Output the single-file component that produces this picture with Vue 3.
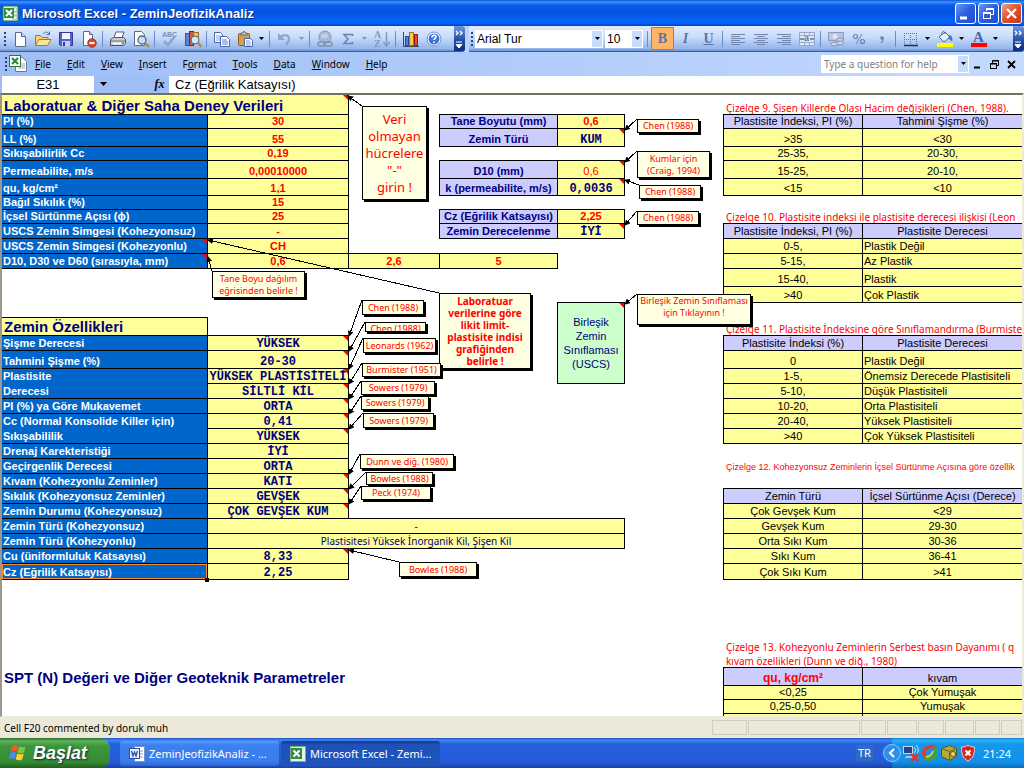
<script setup>
const E = (n) => ['', 'e', n]
const lab = (t, c = '') => [t, 'lab ' + c]
const red = (t) => [t, 'box yel red']
const mono = (t, c = '') => [t, 'box yel mono ' + c]
const lil = (t) => [t, 'box lil']
const head = (a, b) => [[a, 'box hd'], [b, 'box hd last']]
const pair = (a, b, c = '') => [[a, 'box yel ctr'], [b, 'box yel last ' + (c || 'ctr')]]
const title = (t, c = '') => [t, 'ttl ' + c, 2]

const rows = [
  { h: 20, c: [['Laboratuar & Diğer Saha Deney Verileri', 'box yel big note', 2], E(4), title('Çizelge 9. Şisen Killerde Olası Hacim değişikleri (Chen, 1988).')] },
  { h: 14, c: [lab('PI (%)'), red('30'), E(1), lil('Tane Boyutu (mm)'), red('0,6'), E(1), ...head('Plastisite İndeksi, PI (%)', 'Tahmini Şişme (%)')] },
  { h: 18, c: [lab('LL (%)'), red('55'), E(1), lil('Zemin Türü'), mono('KUM', 'note'), E(1), ...pair('>35', '<30')] },
  { h: 14, c: [lab('Sıkışabilirlik Cc'), red('0,19'), E(4), ...pair('25-35,', '20-30,')] },
  { h: 18, c: [lab('Permeabilite, m/s'), red('0,00010000'), E(1), lil('D10 (mm)'), ['0,6', 'box yel red thin note'], E(1), ...pair('15-25,', '20-10,')] },
  { h: 17, c: [lab('qu, kg/cm²'), red('1,1'), E(1), lil('k (permeabilite, m/s)'), mono('0,0036', 'note'), E(1), ...pair('<15', '<10')] },
  { h: 14, c: [lab('Bağıl Sıkılık (%)'), red('15'), E(6)] },
  { h: 14, c: [lab('İçsel Sürtünme Açısı (ϕ)'), red('25'), E(1), lil('Cz (Eğrilik Katsayısı)'), red('2,25'), E(1), title('Çizelge 10. Plastisite indeksi ile plastisite derecesi ilişkisi (Leon')] },
  { h: 15, c: [lab('USCS Zemin Simgesi (Kohezyonsuz)'), red('-'), E(1), lil('Zemin Derecelenme'), mono('İYİ', 'note'), E(1), ...head('Plastisite İndeksi, PI (%)', 'Plastisite Derecesi')] },
  { h: 15, c: [lab('USCS Zemin Simgesi (Kohezyonlu)', 'note'), red('CH'), E(4), ...pair('0-5,', 'Plastik Değil', 'lft')] },
  { h: 15, c: [lab('D10, D30 ve D60 (sırasıyla, mm)', 'note'), red('0,6'), red('2,6'), red('5'), E(2), ...pair('5-15,', 'Az Plastik', 'lft')] },
  { h: 18, c: [E(6), ...pair('15-40,', 'Plastik', 'lft')] },
  { h: 16, c: [E(6), ...pair('>40', 'Çok Plastik', 'lft')] },
  { h: 15, c: [E(4), ['Birleşik\nZemin\nSınıflaması\n(USCS)', 'box grn note', 1, 5], E(3)] },
  { h: 18, c: [['Zemin Özellikleri', 'box yel big'], E(3), E(1), title('Çizelge 11. Plastisite İndeksine göre Sınıflamandırma (Burmiste')] },
  { h: 15, c: [lab('Şişme Derecesi'), mono('YÜKSEK', 'note'), E(2), E(1), ...head('Plastisite İndeksi (%)', 'Plastisite Derecesi')] },
  { h: 18, c: [lab('Tahmini Şişme (%)'), mono('20-30', 'note'), E(2), E(1), ...pair('0', 'Plastik Değil', 'lft')] },
  { h: 15, c: [lab('Plastisite', 'open'), mono('YÜKSEK PLASTİSİTELİ', 'note'), E(2), E(1), ...pair('1-5,', 'Önemsiz Derecede Plastisiteli', 'lft')] },
  { h: 15, c: [lab('Derecesi'), mono('SİLTLİ KİL', 'note'), E(4), ...pair('5-10,', 'Düşük Plastisiteli', 'lft')] },
  { h: 15, c: [lab('PI (%) ya Göre Mukavemet'), mono('ORTA', 'note'), E(4), ...pair('10-20,', 'Orta Plastisiteli', 'lft')] },
  { h: 15, c: [lab('Cc (Normal Konsolide Killer için)', 'open'), mono('0,41', 'note'), E(4), ...pair('20-40,', 'Yüksek Plastisiteli', 'lft')] },
  { h: 15, c: [lab('Sıkışabililik'), mono('YÜKSEK', 'note'), E(4), ...pair('>40', 'Çok Yüksek Plastisiteli', 'lft')] },
  { h: 15, c: [lab('Drenaj Karekteristiği'), mono('İYİ'), E(6)] },
  { h: 15, c: [lab('Geçirgenlik Derecesi'), mono('ORTA'), E(4), title('Çizelge 12. Kohezyonsuz Zeminlerin İçsel Sürtünme Açısına göre özellik', 'sm')] },
  { h: 15, c: [lab('Kıvam (Kohezyonlu Zeminler)'), mono('KATI', 'note'), E(6)] },
  { h: 15, c: [lab('Sıkılık (Kohezyonsuz Zeminler)'), mono('GEVŞEK', 'note'), E(4), ...head('Zemin Türü', 'İçsel Sürtünme Açısı (Derece)')] },
  { h: 15, c: [lab('Zemin Durumu (Kohezyonsuz)'), mono('ÇOK GEVŞEK KUM', 'note'), E(4), ...pair('Çok Gevşek Kum', '<29')] },
  { h: 15, c: [lab('Zemin Türü (Kohezyonsuz)'), ['-', 'box yel wide', 4], E(1), ...pair('Gevşek Kum', '29-30')] },
  { h: 15, c: [lab('Zemin Türü (Kohezyonlu)'), ['Plastisitesi Yüksek İnorganik Kil, Şişen Kil', 'box yel wide', 4], E(1), ...pair('Orta Sıkı Kum', '30-36')] },
  { h: 15, c: [lab('Cu (üniformluluk Katsayısı)'), mono('8,33', 'note'), E(4), ...pair('Sıkı Kum', '36-41')] },
  { h: 16, c: [lab('Cz (Eğrilik Katsayısı)', 'sel'), mono('2,25'), E(4), ...pair('Çok Sıkı Kum', '>41')] },
  { h: 15, c: [E(8)] },
  { h: 15, c: [E(8)] },
  { h: 15, c: [E(8)] },
  { h: 15, c: [E(8)] },
  { h: 14, c: [E(6), title('Çizelge 13. Kohezyonlu Zeminlerin Serbest basın Dayanımı ( q')] },
  { h: 14, c: [E(6), title('kıvam özellikleri (Dunn ve diğ., 1980)')] },
  { h: 18, c: [['SPT (N) Değeri ve Diğer Geoteknik Parametreler', 'big', 2], E(4), ['qu, kg/cm²', 'box hd redhd'], ['kıvam', 'box hd last']] },
  { h: 14, c: [E(6), ...pair('<0,25', 'Çok Yumuşak')] },
  { h: 14, c: [E(6), ...pair('0,25-0,50', 'Yumuşak')] },
  { h: 15, c: [E(6), ...pair('', '')] },
]

// x, y, width, height of each comment box, then the tip of its arrow
const notes = [
  { t: 'Veri\nolmayan\nhücrelere\n"-"\ngirin !', r: [360, 11, 65, 94], a: [346, 1], c: 'large' },
  { t: 'Chen (1988)', r: [635, 24, 62, 14], a: [623, 35] },
  { t: 'Kumlar için\n(Craig, 1994)', r: [635, 56, 73, 27], a: [623, 67] },
  { t: 'Chen (1988)', r: [637, 90, 62, 14], a: [623, 85] },
  { t: 'Chen (1988)', r: [635, 116, 62, 14], a: [623, 130] },
  { t: 'Tane Boyu dağılım\neğrisinden belirle !', r: [210, 176, 93, 27], a: [206, 162] },
  { t: 'Laboratuar\nverilerine göre\nlikit limit-\nplastisite indisi\ngrafiğinden\nbelirle !', r: [437, 198, 92, 76], a: [206, 145], c: 'bold' },
  { t: 'Chen (1988)', r: [360, 205, 62, 15], a: [347, 241] },
  { t: 'Chen (1988)', r: [363, 227, 61, 10], a: [347, 256], c: 'low' },
  { t: 'Leonards (1962)', r: [361, 243, 73, 15], a: [347, 274] },
  { t: 'Burmister (1951)', r: [360, 268, 79, 14], a: [347, 289] },
  { t: 'Sowers (1979)', r: [359, 286, 74, 14], a: [347, 304] },
  { t: 'Sowers (1979)', r: [359, 301, 68, 14], a: [347, 319] },
  { t: 'Sowers (1979)', r: [361, 318, 71, 15], a: [347, 334] },
  { t: 'Dunn ve diğ. (1980)', r: [358, 359, 94, 15], a: [347, 379] },
  { t: 'Bowles (1988)', r: [364, 377, 67, 13], a: [347, 394] },
  { t: 'Peck (1974)', r: [359, 391, 70, 14], a: [347, 409] },
  { t: 'Bowles (1988)', r: [397, 467, 78, 15], a: [347, 455] },
  { t: 'Birleşik Zemin Sınıflaması\niçin Tıklayının !', r: [635, 199, 114, 31], a: [623, 209], c: 'upper' },
]
const box = (r) => ({ left: r[0] + 'px', top: r[1] + 'px', width: r[2] + 'px', height: r[3] + 'px' })

const menus = ['File', 'Edit', 'View', 'Insert', 'Format', 'Tools', 'Data', 'Window', 'Help']
const hot = { Format: 1 }
const split = menus.map((m) => { const i = hot[m] || 0; return [m.slice(0, i), m[i], m.slice(i + 1)] })
const panels = [35, 112, 25, 30, 26, 29, 25, 21]
</script>

<template>
  <div class="win">
    <header class="title">
      <svg width="17" height="17" viewBox="0 0 17 17"><rect x="1" y="1" width="15" height="15" rx="1" fill="#e8f4e4" stroke="#2c7a3a" /><path d="M10 3h5v3h-5zM10 7h5v3h-5zM10 11h5v3h-5z" fill="#fff" stroke="#7fae84" stroke-width=".7" /><rect x="2" y="3" width="10" height="10" fill="#2f8f45" /><path d="M4 5l6 6M10 5l-6 6" stroke="#fff" stroke-width="2" /></svg>
      <h1>Microsoft Excel - ZeminJeofizikAnaliz</h1>
      <button class="wb" aria-label="Minimize"><svg width="19" height="19"><path d="M4 14h7" stroke="#fff" stroke-width="3" /></svg></button>
      <button class="wb" aria-label="Restore"><svg width="19" height="19" fill="none" stroke="#fff"><path d="M7.500 7V4.500h7v6H12" /><path d="M7 5h8" stroke-width="2" /><rect x="4.500" y="8.500" width="7" height="6" /><path d="M4 9h8" stroke-width="2" /></svg></button>
      <button class="wb close" aria-label="Close"><svg width="19" height="19"><path d="M5 5l9 9M14 5l-9 9" stroke="#fff" stroke-width="2.400" /></svg></button>
    </header>

    <div class="bars">
      <div class="bar std">
        <i class="grip"></i>
        <button aria-label="New"><svg width="18" height="18"><path d="M4.500 2.500h6l4 4v10h-10z" fill="#fdfdff" stroke="#5a6a8c" /><path d="M10.500 2.500v4h4" fill="#cfdcf5" stroke="#5a6a8c" /></svg></button>
        <button aria-label="Open"><svg width="18" height="18"><path d="M1.500 15.500v-10h5l1.500 2h6v3" fill="#f7d374" stroke="#a87a20" /><path d="M1.500 15.500l3.500-6h12l-3.500 6z" fill="#fce59a" stroke="#a87a20" /><path d="M9 4c2-3 5-2 6 0M15.500 1.500v3h-3" fill="none" stroke="#4b6ca8" /></svg></button>
        <button aria-label="Save"><svg width="18" height="18"><path d="M2.500 2.500h13v13h-12l-1-1z" fill="#5b62c4" stroke="#34389a" /><rect x="5" y="3" width="8" height="6" fill="#eef1ff" /><rect x="5" y="11" width="8" height="5" fill="#ccd0e8" /><rect x="6" y="12" width="2" height="4" fill="#34389a" /></svg></button>
        <button aria-label="Permission"><svg width="18" height="18"><path d="M3.500 1.500h6l3 3v11h-9z" fill="#fdfdff" stroke="#5a6a8c" /><path d="M9.500 1.500v3h3" fill="#cfdcf5" stroke="#5a6a8c" /><circle cx="12" cy="13" r="4.200" fill="#e14a2a" stroke="#a62a12" /><path d="M9.500 13h5" stroke="#fff" stroke-width="2" /></svg></button>
        <i class="sep"></i>
        <button aria-label="Print"><svg width="18" height="18"><path d="M5 8l2-6h8l-2 6z" fill="#fff" stroke="#55616f" /><path d="M1.500 9.500l3-2h10l2 2v4l-2 2h-13z" fill="#c9ccd2" stroke="#50565e" /><path d="M2 11h14" stroke="#70767e" /><path d="M4 13.500h8" stroke="#fff" stroke-width="1.500" /><circle cx="14" cy="13" r="1" fill="#3c9a3c" /></svg></button>
        <button aria-label="Print Preview"><svg width="18" height="18"><path d="M2.500 1.500h7l3 3v11h-10z" fill="#fdfdff" stroke="#5a6a8c" /><circle cx="10" cy="10" r="4" fill="#c4e2f6" stroke="#5a6478" stroke-width="1.300" /><path d="M13 13l4 4" stroke="#b98a3c" stroke-width="2.400" /></svg></button>
        <i class="sep"></i>
        <button aria-label="Spelling" disabled><svg width="20" height="18"><text x="2" y="7" font-size="7" fill="#7d8fb8" font-weight="bold">ABC</text><path d="M4 11l4 4 7-9" fill="none" stroke="#8fa4cf" stroke-width="2.600" /></svg></button>
        <button aria-label="Research"><svg width="18" height="18"><rect x="1.500" y="3.500" width="4" height="12" fill="#5b84d6" stroke="#34549a" /><rect x="5.500" y="1.500" width="4" height="14" fill="#d35c48" stroke="#7a2a1c" /><rect x="9.500" y="2.500" width="5" height="9" fill="#e8c35a" stroke="#92702a" /><circle cx="11" cy="10" r="4" fill="#cfe7f7" stroke="#5a6478" /><path d="M14 13l3.500 4" stroke="#b98a3c" stroke-width="2.400" /></svg></button>
        <i class="sep"></i>
        <button aria-label="Copy"><svg width="18" height="18"><path d="M1.500 2.500h6l2 2v8h-8z" fill="#fff" stroke="#4a67ac" /><path d="M3 6h5M3 8h5M3 10h5" stroke="#8aa2d8" /><path d="M7.500 6.500h6l3 3v7h-9z" fill="#fff" stroke="#4a67ac" /><path d="M9 10h5M9 12h6M9 14h6" stroke="#5f7fc8" /></svg></button>
        <button aria-label="Paste"><svg width="18" height="18"><rect x="2.500" y="3.500" width="11" height="12" rx="1" fill="#d8a04a" stroke="#8a5c1c" /><path d="M5 5V3h2l1-2 1 2h2v2z" fill="#d7dbe4" stroke="#666" /><path d="M8.500 8.500h6l2 2v6h-8z" fill="#fff" stroke="#4a67ac" /><path d="M10 11h4M10 13h5M10 15h5" stroke="#7f9ad4" /></svg></button>
        <button class="dd" aria-label="Paste options"><svg width="7" height="4"><path d="M1 0h5L3.500 3z" fill="#000" /></svg></button>
        <i class="sep"></i>
        <button aria-label="Undo" disabled><svg width="18" height="18"><path d="M4 8c3-4 9-4 9 1 0 3-2 4-3 6" fill="none" stroke="#8fa4cf" stroke-width="2.200" /><path d="M2 3v7h7z" fill="#8fa4cf" /></svg></button>
        <button class="dd" aria-label="Undo options" disabled><svg width="7" height="4"><path d="M1 0h5L3.500 3z" fill="#8a94ac" /></svg></button>
        <i class="sep"></i>
        <button aria-label="Hyperlink" disabled><svg width="18" height="18"><circle cx="9" cy="7" r="6" fill="#a9b8d6" stroke="#8595b8" /><path d="M5 4c2 1 4-2 6 0s1 4-2 4-3 1-4-1" fill="#c4d0e8" /><rect x="2" y="12" width="7" height="4" rx="2" fill="none" stroke="#8090b4" stroke-width="1.500" /><rect x="8" y="12" width="8" height="4" rx="2" fill="none" stroke="#8090b4" stroke-width="1.500" /></svg></button>
        <button aria-label="AutoSum" disabled><svg width="18" height="18"><path d="M13.500 6V4.500H5l4 4.500-4 4.500h8.500V12" fill="none" stroke="#6c82b4" stroke-width="1.600" /></svg></button>
        <button class="dd" aria-label="AutoSum options" disabled><svg width="7" height="4"><path d="M1 0h5L3.500 3z" fill="#8a94ac" /></svg></button>
        <button aria-label="Sort Ascending" disabled><svg width="18" height="18" font-family="Liberation Serif, serif"><text x="1" y="8" font-size="10" font-weight="bold" fill="#8496bc">A</text><text x="1" y="17" font-size="10" font-weight="bold" fill="#8496bc">Z</text><path d="M13.500 2v13M10.500 12l3 4 3-4" fill="none" stroke="#8496bc" stroke-width="1.400" /></svg></button>
        <i class="sep"></i>
        <button aria-label="Chart Wizard"><svg width="18" height="18"><path d="M1.500 2v14.500H17" fill="none" stroke="#3a4660" /><rect x="3.500" y="6.500" width="3" height="9" fill="#4a83e0" stroke="#2a4a94" /><rect x="7.500" y="2.500" width="4" height="13" fill="#fccb4a" stroke="#a37414" /><rect x="12.500" y="4.500" width="3" height="11" fill="#e2482c" stroke="#8c2414" /></svg></button>
        <button aria-label="Help"><svg width="18" height="18"><circle cx="9" cy="9" r="7" fill="#fff" stroke="#6a8ed0" /><circle cx="9" cy="9" r="5.500" fill="#3d74d6" /><path d="M7 7.500c0-3 4-3 4-.5 0 1.500-2 1.500-2 3M9 11.500v1.500" fill="none" stroke="#fff" stroke-width="1.600" /></svg></button>
        <button class="cap" aria-label="Toolbar Options"><svg width="9" height="20"><path d="M1 2l2 2-2 2M5 2l2 2-2 2" fill="none" stroke="#fff" stroke-width="1.400" /><path d="M1 13h6M1 15.500h6L4 19z" fill="#fff" stroke="#fff" /></svg></button>
      </div>

      <div class="bar fmt">
        <i class="grip"></i>
        <label class="combo font"><select aria-label="Font"><option>Arial Tur</option></select><span><svg width="7" height="4"><path d="M1 0h5L3.500 3z" /></svg></span></label>
        <label class="combo size"><select aria-label="Font Size"><option>10</option></select><span><svg width="7" height="4"><path d="M1 0h5L3.500 3z" /></svg></span></label>
        <i class="sep"></i>
        <button class="on" aria-label="Bold"><b>B</b></button>
        <button aria-label="Italic"><b class="it">I</b></button>
        <button aria-label="Underline"><b class="un">U</b></button>
        <i class="sep"></i>
        <button aria-label="Align Left"><svg width="18" height="18"><path d="M2 4.500h14M2 6.500h9M2 8.500h14M2 10.500h9M2 12.500h14M2 14.500h9" stroke="#7286b0" /></svg></button>
        <button aria-label="Center"><svg width="18" height="18"><path d="M2 4.500h14M5 6.500h8M2 8.500h14M5 10.500h8M2 12.500h14M5 14.500h8" stroke="#7286b0" /></svg></button>
        <button aria-label="Align Right"><svg width="18" height="18"><path d="M2 4.500h14M7 6.500h9M2 8.500h14M7 10.500h9M2 12.500h14M7 14.500h9" stroke="#7286b0" /></svg></button>
        <button aria-label="Merge and Center"><svg width="18" height="18"><path d="M1.500 2.500h15v13h-15zM1.500 5.500h15M1.500 12.500h15M6.500 2.500v3M11.500 2.500v3M6.500 12.500v3M11.500 12.500v3" fill="#dfe7f6" stroke="#97a7c8" /><path d="M2 9h4M12 9h4" stroke="#5f73a0" stroke-width="1.500" /><text x="6" y="11" font-size="9" font-weight="bold" fill="#5f73a0">a</text></svg></button>
        <i class="sep"></i>
        <button aria-label="Currency"><svg width="18" height="18"><rect x="1.500" y="2.500" width="15" height="8" fill="#b9c6e0" stroke="#8d9dc2" /><circle cx="8" cy="6.500" r="2.500" fill="#dfe7f6" /><ellipse cx="13" cy="10" rx="3.500" ry="2" fill="#cdd6e8" stroke="#8090b4" /><ellipse cx="13" cy="13" rx="3.500" ry="2" fill="#cdd6e8" stroke="#8090b4" /><ellipse cx="7" cy="14" rx="3.500" ry="2" fill="#cdd6e8" stroke="#8090b4" /></svg></button>
        <button aria-label="Percent"><svg width="18" height="18"><path d="M12 4L6 14" stroke="#6c80aa" /><circle cx="5.500" cy="6.500" r="2" fill="none" stroke="#6c80aa" stroke-width="1.200" /><circle cx="12.500" cy="11.500" r="2" fill="none" stroke="#6c80aa" stroke-width="1.200" /></svg></button>
        <button aria-label="Comma"><svg width="18" height="18"><circle cx="9" cy="8" r="1.700" fill="#6c80aa" /><path d="M10.200 8c0 3-1 4-2.500 4.500" fill="none" stroke="#6c80aa" stroke-width="1.200" /></svg></button>
        <i class="sep"></i>
        <button aria-label="Borders"><svg width="18" height="18"><path d="M2.500 3v11M8.500 3v11M14.500 3v11M2 3.500h13M2 9.500h13" stroke="#6078a8" stroke-dasharray="1 1" /><path d="M2 15.500h14" stroke="#1b2c66" stroke-width="1.500" /></svg></button>
        <button class="dd" aria-label="Border options"><svg width="7" height="4"><path d="M1 0h5L3.500 3z" /></svg></button>
        <button aria-label="Fill Color"><svg width="18" height="18"><path d="M3 7l6-5 5 5-6 5z" fill="#eef2fa" stroke="#50648e" /><path d="M6 5c-1-4 3-5 3-1" fill="none" stroke="#50648e" /><path d="M13 5c3 0 4 3 3 7-1-2-2-3-4-3z" fill="#4674c8" /><rect x="1" y="13" width="16" height="4" fill="#ffff00" /></svg></button>
        <button class="dd" aria-label="Fill options"><svg width="7" height="4"><path d="M1 0h5L3.500 3z" /></svg></button>
        <button aria-label="Font Color"><svg width="18" height="18"><text x="3" y="12" font-size="15" font-weight="bold" font-family="Liberation Serif, serif" fill="#4867a8">A</text><rect x="1" y="13" width="16" height="4" fill="#ff0000" /></svg></button>
        <button class="dd" aria-label="Font color options"><svg width="7" height="4"><path d="M1 0h5L3.500 3z" /></svg></button>
        <button class="cap" aria-label="Toolbar Options"><svg width="9" height="20"><path d="M1 2l2 2-2 2M5 2l2 2-2 2" fill="none" stroke="#fff" stroke-width="1.400" /><path d="M1 13h6M1 15.500h6L4 19z" fill="#fff" stroke="#fff" /></svg></button>
      </div>
    </div>

    <nav class="menu">
      <i class="grip"></i>
      <svg class="doc" width="18" height="18"><path d="M6.500 2.500h7l4 4v10h-11z" fill="#fff" stroke="#6a7a98" /><path d="M9 9h7M9 11h7M9 13h7" stroke="#9aa8c8" /><rect x="0.500" y="0.500" width="11" height="11" fill="#fff" stroke="#2c7a3a" /><path d="M3 3l6 6M9 3l-6 6" stroke="#2c8a3e" stroke-width="2.200" /></svg>
      <button v-for="m in split" :key="m[0] + m[1]">{{ m[0] }}<u>{{ m[1] }}</u>{{ m[2] }}</button>
      <label class="ask"><input type="text" placeholder="Type a question for help" aria-label="Type a question for help" /><span><svg width="7" height="4"><path d="M1 0h5L3.500 3z" /></svg></span></label>
      <button class="mini" aria-label="Minimize Window"><svg width="9" height="9"><path d="M1 7.500h6" stroke="#000" stroke-width="2" /></svg></button>
      <button class="mini" aria-label="Restore Window"><svg width="9" height="9" fill="none" stroke="#000"><path d="M2.500 3V.5h6v5H7M2 1h7" /><rect x=".5" y="3.500" width="6" height="5" /><path d="M0 4h7" /></svg></button>
      <button class="mini" aria-label="Close Window"><svg width="9" height="9"><path d="M1 1l7 7M8 1l-7 7" stroke="#000" stroke-width="1.800" /></svg></button>
    </nav>

    <div class="formula">
      <input class="name" type="text" value="E31" aria-label="Name Box" />
      <button class="drop" aria-label="Name list"><svg width="9" height="5"><path d="M1 0h7L4.500 4z" /></svg></button>
      <button class="fx" aria-label="Insert Function">fx</button>
      <input class="fin" type="text" value="Cz (Eğrilik Katsayısı)" aria-label="Formula Bar" />
    </div>

    <main class="sheet">
      <table>
        <colgroup><col class="a" /><col class="b" /><col class="c" /><col class="d" /><col class="ee" /><col class="f" /><col class="g" /><col /></colgroup>
        <tbody>
          <tr v-for="(r, i) in rows" :key="i" :style="{ height: r.h + 'px' }">
            <td v-for="(c, j) in r.c" :key="j" :class="c[1]" :colspan="c[2] || 1" :rowspan="c[3] || 1">{{ c[0] }}</td>
          </tr>
        </tbody>
      </table>
      <svg class="arrows" width="100%" height="100%">
        <defs><marker id="tip" viewBox="0 0 6 6" refX="5" refY="3" markerWidth="6" markerHeight="6" orient="auto"><path d="M0 0l6 3-6 3z" /></marker></defs>
        <line v-for="(n, i) in notes" :key="i" :x1="n.r[0]" :y1="n.r[1]" :x2="n.a[0]" :y2="n.a[1]" marker-end="url(#tip)" />
      </svg>
      <aside v-for="(n, i) in notes" :key="i" class="cmt" :class="n.c" :style="box(n.r)">{{ n.t }}</aside>
    </main>

    <footer class="status">
      <span>Cell F20 commented by doruk muh</span>
      <div class="panels"><i v-for="(w, i) in panels" :key="i" :style="{ width: w + 'px' }"></i></div>
    </footer>

    <div class="task">
      <button class="start">
        <svg width="20" height="20" viewBox="0 0 20 20"><path d="M3 3c2-1.500 4-1 6 0L7.500 9C6 8 4 7.500 1.500 9z" fill="#f0592a" /><path d="M10 3.500c2 1 4 1.200 6.500 0L15 9.500c-2.500 1.200-4.500 1-6.500 0z" fill="#7cc83c" /><path d="M1.200 10c2.500-1.500 4.300-1 6 0L5.600 16c-1.600-1-3.600-1.300-6 0z" fill="#4a8af4" /><path d="M8.200 10.500c2 1 4 1.200 6.500 0L13.200 16.500c-2.500 1.200-4.500 1-6.500 0z" fill="#fcd03c" /></svg>
        Başlat
      </button>
      <button class="tb"><svg width="16" height="16"><path d="M5.500.5h10v15h-10z" fill="#fff" stroke="#7c92c4" /><path d="M9 5h5M9 8h5M9 11h5" stroke="#8aa2d8" /><rect x=".5" y="2.500" width="10" height="10" fill="#e9f0ff" stroke="#2c4f9e" /><path d="M2.500 5l1.500 5 1.500-4 1.500 4 1.500-5" fill="none" stroke="#2c4f9e" stroke-width="1.300" /></svg><span>ZeminJeofizikAnaliz - ...</span></button>
      <button class="tb act"><svg width="16" height="16"><rect x=".5" y=".5" width="15" height="15" fill="#e8f4e4" stroke="#7fae84" /><rect x="1" y="2" width="11" height="11" fill="#2f8f45" /><path d="M3.500 4.500l6 6M9.500 4.500l-6 6" stroke="#fff" stroke-width="2" /></svg><span>Microsoft Excel - Zemi...</span></button>
      <span class="lang">TR</span>
      <div class="tray">
        <button class="chev" aria-label="Show hidden icons"><svg width="18" height="18"><circle cx="9" cy="9" r="8.500" fill="#2f8fe8" stroke="#8cc8fa" /><path d="M11 5L7 9l4 4" fill="none" stroke="#fff" stroke-width="2" /></svg></button>
        <svg width="18" height="18"><rect x="1.500" y="2.500" width="9" height="7" fill="#26468a" stroke="#c9d2e4" /><path d="M4 12h6l1 2H3z" fill="#b8c2d6" /><path d="M12 3c2 2 2 4 0 6M14 1c3 3 3 7 0 10" fill="none" stroke="#dfe8f8" /><path d="M9 10l7 7M16 10l-7 7" stroke="#e6301c" stroke-width="2" /></svg>
        <svg width="18" height="18" fill="none" stroke-width="3.400"><path d="M6 14C1 12 2 5 8 3c3-1 5 0 6 2" stroke="#e23a24" /><path d="M12 4c5 2 4 9-2 11-3 1-5 0-6-2" stroke="#3da53a" /><path d="M5 12c2 2 6-1 7-5" stroke="#f0c22c" stroke-width="2" /></svg>
        <svg width="18" height="18"><path d="M1.500 4.500l8-3 7 3v8l-7 4-8-4z" fill="#b8a83c" stroke="#5c5418" /><path d="M1.500 4.500l8 3v9M9.500 7.500l7-3" fill="none" stroke="#6c6420" /><circle cx="13" cy="10" r="2.500" fill="#e3dc8c" stroke="#5c5418" /></svg>
        <svg width="18" height="18"><path d="M9 1c2 1.500 4 2 6.500 2 0 7-1 11-6.500 14C3.500 14 2.500 10 2.500 3 5 3 7 2.500 9 1z" fill="#d8261c" stroke="#f2c8c4" /><path d="M6.500 6.500l5 5M11.500 6.500l-5 5" stroke="#fff" stroke-width="2" /></svg>
        <time>21:24</time>
      </div>
    </div>
  </div>
</template>

<style>
body { margin: 0; }
</style>

<style scoped>
* { box-sizing: border-box; }
.win { display: flex; flex-direction: column; height: 100vh; overflow: hidden; font: 11px "Liberation Sans", Arial, sans-serif; background: #fff; color: #000; }
button { border: 0; padding: 0; margin: 0; background: none; font: inherit; color: inherit; display: flex; align-items: center; justify-content: center; flex: none; }
input, select { border: 0; padding: 0; margin: 0; border-radius: 0; background: #fff; font: inherit; color: #000; outline: none; min-width: 0; }
svg { flex: none; display: block; }

.title { flex: none; height: 26px; display: flex; align-items: center; gap: 2px; padding: 0 2px; background: linear-gradient(#0a58d8 0, #3a93ff 2px, #0a5ce8 5px, #0453e0 12px, #0560f4 19px, #0664fa 23px, #0140c0 26px); color: #fff; }
.title h1 { flex: 1; margin: 0; padding-left: 1px; font: bold 13px "Liberation Sans", sans-serif; white-space: nowrap; text-shadow: 1px 1px #0a2a80; }
.wb { width: 21px; height: 21px; border: 1px solid #fff; border-radius: 3px; background: linear-gradient(135deg, #6a98f4, #2a5ce0 50%, #1c4fd2); }
.close { background: linear-gradient(135deg, #f0a084, #e0502c 50%, #c4381a); }

.bars { flex: none; display: flex; gap: 4px; background: #b9d0f8; }
.bar { height: 26px; display: flex; align-items: center; background: linear-gradient(#e1ecfd, #c7dbfa 45%, #94b6ea 90%, #6a8fd0); border-bottom: 1px solid #3b619c; border-radius: 0 3px 3px 0; overflow: hidden; }
.std { width: 465px; flex: none; padding-left: 4px; }
.fmt { flex: 1; min-width: 0; padding-left: 2px; }
.bar button { width: 23px; height: 22px; }
.bar .dd { width: 11px; }
.grip { flex: none; width: 2px; height: 14px; margin-right: 2px; background: repeating-linear-gradient(#27418a 0 2px, transparent 2px 4px); }
.sep { flex: none; width: 1px; height: 16px; margin: 0 3px 0 2px; background: #6a8ccb; }
.bar .cap { margin-left: auto; width: 11px; height: 26px; background: linear-gradient(#6f96dd, #1b47a4 60%, #0b2a80); }
.bar .on { background: #ffb564; border: 1px solid #7a86a8; height: 23px; }
.bar b { font: bold 14px "Liberation Serif", serif; color: #5a74aa; }
.bar .it { font-style: italic; }
.bar .un { text-decoration: underline; }
.combo { display: flex; background: #fff; height: 18px; font-size: 12px; margin-right: 2px; }
.combo select { flex: 1; appearance: none; padding-left: 2px; }
.combo span, .ask span { width: 11px; background: #c7dbfa; border: 1px solid #fff; border-left: 0; display: flex; align-items: center; justify-content: center; flex: none; }
.font { width: 128px; }
.size { width: 38px; }

.menu { flex: none; height: 24px; display: flex; align-items: center; padding: 0 4px 0 5px; background: linear-gradient(90deg, #9ebef5, #c4daff); font: 10px "Noto Sans", sans-serif; }
.menu .doc { margin: 0; }
.menu button { padding: 0 8px; height: 20px; }
.menu .ask { margin-left: auto; display: flex; width: 148px; height: 18px; }
.ask input { flex: 1; padding-left: 3px; }
.ask input::placeholder { color: #808080; opacity: 1; }
.menu .mini { padding: 0; width: 17px; }

.formula { flex: none; height: 17px; display: flex; align-items: stretch; background: #9ebef5; font-size: 13px; }
.formula .name { width: 94px; text-align: center; border-left: 2px solid #9ebef5; }
.formula .drop { width: 18px; }
.formula .fx { margin-left: auto; width: 19px; font: italic bold 12px "Liberation Serif", serif; }
.formula .fin { width: calc(100% - 169px); padding-left: 6px; }

.sheet { flex: 1; min-height: 0; position: relative; overflow: hidden; border-style: solid; border-color: #74705f #ece9d8 #ece9d8 #9c988c; border-width: 2px 2px 1px 2px; }
table { width: 100%; table-layout: fixed; border-collapse: separate; border-spacing: 0; }
.a { width: 206px; } .b { width: 141px; } .c { width: 91px; } .d { width: 118px; } .ee { width: 67px; } .f { width: 99px; } .g { width: 139px; }
td { padding: 0; height: inherit; line-height: 13px; font-size: 11px; white-space: nowrap; vertical-align: bottom; position: relative; }
.box { border: solid #000; border-width: 0 1px 1px 0; box-shadow: -1px 0 #000, 0 -1px #000, -1px -1px #000; text-align: center; }
.last { border-right: 0; }
.yel { background: #ffff99; }
.lab { background: #0066cc; color: #fff; font-weight: bold; padding-left: 1px; border: solid #000; border-width: 0 1px 1px 0; }
.open { border-bottom-color: #0066cc; }
.red { color: #f00; font-weight: bold; }
.thin { font-weight: normal; }
.mono { color: #000080; font: bold 12px/11px "Liberation Mono", monospace; }
.lil { background: #ccccff; color: #000080; font-weight: bold; }
.hd { background: #ccccff; }
.redhd { color: #f00; font-weight: bold; font-size: 12px; }
.lft { text-align: left; padding-left: 1px; }
.big { text-align: left; font-size: 15px; line-height: 17px; font-weight: bold; color: #000080; padding-left: 2px; }
.ttl { color: #f00; padding-left: 2px; font: 10px/13px "Noto Sans", sans-serif; }
.sm { font-family: "Liberation Sans", sans-serif; font-size: 9px; }
.wide { color: #000080; font: 10px/13px "Noto Sans", sans-serif; }
.grn { background: #ccffcc; color: #000080; white-space: pre-line; line-height: 14px; vertical-align: middle; }
.note::after { content: ""; position: absolute; right: 0; top: 0; border: solid transparent; border-width: 0 5px 5px 0; border-right-color: #f00; }
.sel { box-shadow: inset 0 0 0 1px #ff8a1c; }
.sel::before { content: ""; position: absolute; right: -2px; bottom: -3px; width: 4px; height: 4px; background: #000; z-index: 1; }

.arrows { position: absolute; left: 0; top: 0; }
.arrows line { stroke: #000; stroke-width: 1; shape-rendering: crispEdges; }
.cmt { position: absolute; display: flex; align-items: center; justify-content: center; overflow: visible; background: #ffffe1; border: 1px solid #000; box-shadow: 2px 2px #000; color: #f00; font: 9px/12px "Noto Sans", sans-serif; text-align: center; white-space: pre; }
.low { overflow: hidden; align-items: flex-start; }
.upper { align-items: flex-start; }
.bold { font-weight: bold; font-size: 10px; }
.large { font-size: 13px; line-height: 17px; }

.status { flex: none; height: 21px; display: flex; align-items: center; justify-content: space-between; padding: 0 2px 0 4px; background: #ece9d8; font: 10px "Noto Sans", sans-serif; }
.panels { display: flex; gap: 1px; }
.panels i { height: 15px; border: 1px solid #d2cebc; }

.task { flex: none; height: 30px; display: flex; align-items: stretch; background: linear-gradient(#1f4fc0 0, #3f86f4 2px, #2760dc 6px, #245cd8 24px, #1a43a8 30px); color: #fff; font: 11px "Noto Sans", sans-serif; }
.start { width: 110px; margin-right: 10px; gap: 4px; padding-right: 14px; border-radius: 0 10px 10px 0; background: linear-gradient(#2a6a28 0, #5cb258 3px, #3c963a 8px, #368c34 24px, #1f5c1e 30px); font: italic bold 18px "Liberation Sans", sans-serif; text-shadow: 1px 1px 2px #123; }
.tb { width: 159px; height: 25px; margin: 3px 2px 0 0; justify-content: flex-start; gap: 4px; padding-left: 9px; border-radius: 3px; background: linear-gradient(#5c9bfc, #3c81f0 4px, #3a7cec 20px, #2a66d4); overflow: hidden; white-space: nowrap; }
.act { background: linear-gradient(#16388c, #1e52b8 4px, #1f54bc); }
.lang { margin: 7px 0 7px auto; padding: 0 2px; background: #316ac5; line-height: 16px; }
.tray { display: flex; align-items: center; gap: 1px; margin-left: 19px; padding-right: 13px; background: linear-gradient(#0c7ad0 0, #2cb0f6 2px, #1398ec 6px, #1290e8 24px, #0c6ab8 30px); }
.chev { margin-left: -9px; }
.tray time { margin-left: 5px; }
</style>
